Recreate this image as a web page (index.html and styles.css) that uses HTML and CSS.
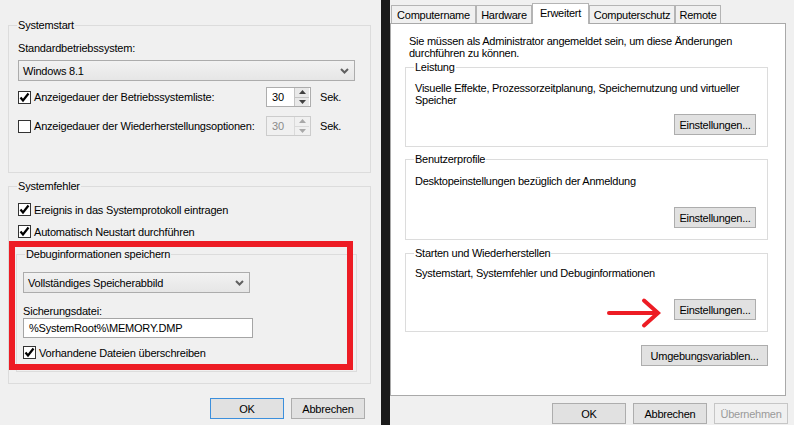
FILE: index.html
```html
<!DOCTYPE html>
<html>
<head>
<meta charset="utf-8">
<link rel="stylesheet" href="styles.css">
</head>
<body>
<div class="screen">
  <div class="left">
    <div class="group g-start">
      <span class="gtitle">Systemstart</span>
      <div class="label">Standardbetriebssystem:</div>
      <div class="select sel-os"><span>Windows 8.1</span><svg class="chev" width="9" height="6" viewBox="0 0 9 6"><polyline points="1,1 4.5,4.5 8,1" fill="none" stroke="#606060" stroke-width="2"/></svg></div>
      <div class="opt-row r1">
        <span class="cb"><svg width="11" height="11" viewBox="0 0 11 11"><path d="M1.5 5.5 L4 8.5 L9.5 1.5" fill="none" stroke="#000" stroke-width="2.2"/></svg></span>
        <span class="cbl">Anzeigedauer der Betriebssystemliste:</span>
        <div class="spin"><span class="spin-val">30</span><span class="spin-btns"><span class="sb"><svg width="7" height="4" viewBox="0 0 7 4"><path d="M0 4 L3.5 0 L7 4Z" fill="#404040"/></svg></span><span class="sb"><svg width="7" height="4" viewBox="0 0 7 4"><path d="M0 0 L3.5 4 L7 0Z" fill="#404040"/></svg></span></span></div>
        <span class="sek">Sek.</span>
      </div>
      <div class="opt-row r2">
        <span class="cb"></span>
        <span class="cbl">Anzeigedauer der Wiederherstellungsoptionen:</span>
        <div class="spin disabled"><span class="spin-val">30</span><span class="spin-btns"><span class="sb"><svg width="7" height="4" viewBox="0 0 7 4"><path d="M0 4 L3.5 0 L7 4Z" fill="#a8a8a8"/></svg></span><span class="sb"><svg width="7" height="4" viewBox="0 0 7 4"><path d="M0 0 L3.5 4 L7 0Z" fill="#a8a8a8"/></svg></span></span></div>
        <span class="sek">Sek.</span>
      </div>
    </div>

    <div class="group g-fehler">
      <span class="gtitle">Systemfehler</span>
      <div class="cbrow first">
        <span class="cb"><svg width="11" height="11" viewBox="0 0 11 11"><path d="M1.5 5.5 L4 8.5 L9.5 1.5" fill="none" stroke="#000" stroke-width="2.2"/></svg></span>
        <span>Ereignis in das Systemprotokoll eintragen</span>
      </div>
      <div class="cbrow">
        <span class="cb"><svg width="11" height="11" viewBox="0 0 11 11"><path d="M1.5 5.5 L4 8.5 L9.5 1.5" fill="none" stroke="#000" stroke-width="2.2"/></svg></span>
        <span>Automatisch Neustart durchführen</span>
      </div>
      <div class="group g-debug">
        <span class="gtitle">Debuginformationen speichern</span>
        <div class="select sel-dump"><span>Vollständiges Speicherabbild</span><svg class="chev" width="9" height="6" viewBox="0 0 9 6"><polyline points="1,1 4.5,4.5 8,1" fill="none" stroke="#606060" stroke-width="2"/></svg></div>
        <div class="label small">Sicherungsdatei:</div>
        <div class="textbox">%SystemRoot%\MEMORY.DMP</div>
        <div class="cbrow dbg">
          <span class="cb"><svg width="11" height="11" viewBox="0 0 11 11"><path d="M1.5 5.5 L4 8.5 L9.5 1.5" fill="none" stroke="#000" stroke-width="2.2"/></svg></span>
          <span>Vorhandene Dateien überschreiben</span>
        </div>
      </div>
    </div>

    <div class="btnrow left-btns">
      <div class="btn default">OK</div>
      <div class="btn">Abbrechen</div>
    </div>

    <div class="annot-box"></div>
  </div>

  <div class="divider"></div>

  <div class="right">
    <div class="tabs">
      <div class="tab w-cn">Computername</div>
      <div class="tab w-hw">Hardware</div>
      <div class="tab w-er active">Erweitert</div>
      <div class="tab w-cs">Computerschutz</div>
      <div class="tab w-rm">Remote</div>
    </div>
    <div class="panel">
      <div class="intro">Sie müssen als Administrator angemeldet sein, um diese Änderungen<br>durchführen zu können.</div>
      <div class="rgroup g-leistung">
        <span class="gtitle white">Leistung</span>
        <div class="txt">Visuelle Effekte, Prozessorzeitplanung, Speichernutzung und virtueller<br>Speicher</div>
        <div class="btn set">Einstellungen...</div>
      </div>
      <div class="rgroup g-profile">
        <span class="gtitle white">Benutzerprofile</span>
        <div class="txt">Desktopeinstellungen bezüglich der Anmeldung</div>
        <div class="btn set">Einstellungen...</div>
      </div>
      <div class="rgroup g-restore">
        <span class="gtitle white">Starten und Wiederherstellen</span>
        <div class="txt">Systemstart, Systemfehler und Debuginformationen</div>
        <div class="btn set">Einstellungen...</div>
      </div>
      <div class="envrow">
        <div class="btn env">Umgebungsvariablen...</div>
      </div>
    </div>
    <div class="btnrow right-btns">
      <div class="btn">OK</div>
      <div class="btn">Abbrechen</div>
      <div class="btn disabled">Übernehmen</div>
    </div>
    <svg class="annot-arrow" width="56" height="32" viewBox="0 0 56 32"><path d="M3 16 H51" stroke="#ed1c24" stroke-width="4" stroke-linecap="round" fill="none"/><path d="M38 3.5 L52 16 L38 28.5" stroke="#ed1c24" stroke-width="4" stroke-linecap="round" stroke-linejoin="miter" fill="none"/></svg>
  </div>
</div>
</body>
</html>
```

FILE: styles.css
```css
* { box-sizing: border-box; }
body {
  margin: 0;
  width: 794px;
  height: 425px;
  overflow: hidden;
  font-family: "Liberation Sans", Arial, sans-serif;
  font-size: 11px;
  color: #000;
  background: #f0f0f0;
}
.screen { display: flex; height: 425px; }

.left {
  width: 381px;
  background: #f0f0f0;
  position: relative;
  padding: 25px 0 0 8px;
  letter-spacing: -0.2px;
}
.divider { width: 9px; background: #1b1b1b; }
.right {
  width: 404px;
  background: #f0f0f0;
  position: relative;
  letter-spacing: -0.25px;
}

.group { position: relative; border: 1px solid #dcdcdc; }
.gtitle {
  position: absolute;
  top: -8px;
  left: 8px;
  padding: 0 1px;
  line-height: 15px;
  background: #f0f0f0;
  white-space: nowrap;
}
.gtitle.white { background: #fff; }

.g-start { width: 363px; height: 148px; padding-left: 9px; }
.label { line-height: 15px; margin-top: 15px; }
.label.small { line-height: 13px; margin-top: 12px; }

.select {
  height: 21px;
  border: 1px solid #acacac;
  background: linear-gradient(#f2f2f2, #e6e6e6);
  display: flex;
  align-items: center;
  justify-content: space-between;
  padding: 0 5px 0 4px;
}
.sel-os { width: 337px; margin-top: 4px; }
.sel-dump { width: 227px; margin-top: 17px; }

.opt-row {
  display: grid;
  grid-template-columns: 16px 232px 45px auto;
  align-items: center;
  height: 20px;
}
.opt-row.r1 { margin-top: 6px; }
.opt-row.r2 { margin-top: 9px; }

.cb {
  width: 13px;
  height: 13px;
  border: 1px solid #333;
  background: #fff;
  display: flex;
  align-items: center;
  justify-content: center;
}
.sek { padding-left: 9px; }

.spin {
  height: 20px;
  width: 45px;
  border: 1px solid #adadad;
  background: #fff;
  display: flex;
}
.spin-val { flex: 1; padding-left: 5px; line-height: 18px; }
.spin-btns {
  width: 15px;
  margin: 0 1px 0 0;
  display: flex;
  flex-direction: column;
  border-left: 1px solid #c4c4c4;
}
.sb {
  flex: 1;
  background: #e9e9e9;
  display: flex;
  align-items: center;
  justify-content: center;
}
.sb + .sb { border-top: 1px solid #c4c4c4; }
.spin.disabled { border-color: #cccccc; background: #f0f0f0; color: #8a8a8a; }
.spin.disabled .spin-btns { border-left-color: #dadada; }
.spin.disabled .sb { background: #f0f0f0; }
.spin.disabled .sb + .sb { border-top-color: #dadada; }

.g-fehler {
  width: 363px;
  height: 198px;
  margin-top: 13px;
  padding: 14px 0 0 7px;
}
.cbrow {
  display: flex;
  align-items: center;
  gap: 3px;
  height: 17px;
  margin-left: 2px;
  margin-top: 5px;
}
.cbrow.first { margin-top: 0; }
.g-debug {
  width: 341px;
  height: 118px;
  margin-top: 14px;
  padding-left: 6px;
}
.cbrow.dbg { margin-left: 0; margin-top: 6px; }
.textbox {
  width: 230px;
  height: 20px;
  border: 1px solid #a5a5a5;
  background: #fff;
  padding-left: 5px;
  line-height: 18px;
}

.btnrow { display: flex; justify-content: flex-end; gap: 7px; }
.left-btns { width: 363px; margin-top: 14px; padding-right: 6px; }
.btn {
  height: 21px;
  width: 74px;
  border: 1px solid #adadad;
  background: #e1e1e1;
  display: flex;
  align-items: center;
  justify-content: center;
  white-space: nowrap;
}
.btn.default { border-color: #3c8fdc; }
.btn.disabled { background: #f0f0f0; border-color: #c6c6c6; color: #9a9a9a; }

.annot-box {
  position: absolute;
  left: 9px;
  top: 241px;
  width: 344px;
  height: 129px;
  border: 6px solid #ed1c24;
}

/* right dialog */
.tabs {
  display: flex;
  align-items: flex-end;
  height: 23px;
  padding-left: 1px;
}
.tab {
  height: 18px;
  border: 1px solid #b4b4b4;
  border-bottom: 0;
  background: #f0f0f0;
  display: flex;
  align-items: center;
  justify-content: center;
  white-space: nowrap;
  padding-top: 1px;
}
.tab.active {
  height: 21px;
  margin-bottom: -1px;
  background: #fff;
  position: relative;
  z-index: 1;
  padding-top: 0;
  padding-bottom: 3px;
}
.w-cn { width: 85px; }
.w-hw { width: 56px; }
.w-er { width: 57px; }
.w-cs { width: 86px; }
.w-rm { width: 46px; }

.panel {
  width: 396px;
  height: 373px;
  border: 1px solid #a9a9a9;
  background: #fff;
  padding-top: 11px;
}
.intro { margin-left: 18px; line-height: 12px; }
.rgroup {
  position: relative;
  margin-left: 14px;
  width: 363px;
  border: 1px solid #dcdcdc;
  display: flex;
  flex-direction: column;
  padding: 14px 11px 11px 9px;
}
.rgroup .txt { line-height: 12px; }
.rgroup .btn.set { margin-top: auto; align-self: flex-end; width: 82px; }
.g-leistung { height: 80px; margin-top: 8px; }
.g-profile { height: 81px; margin-top: 12px; padding-top: 15px; }
.g-restore { height: 79px; margin-top: 13px; padding-top: 13px; }
.envrow { display: flex; justify-content: flex-end; width: 363px; margin-left: 14px; margin-top: 13px; }
.btn.env { width: 127px; }

.right-btns { margin-top: 7px; padding-right: 6px; }

.annot-arrow {
  position: absolute;
  left: 216px;
  top: 297px;
}
```
